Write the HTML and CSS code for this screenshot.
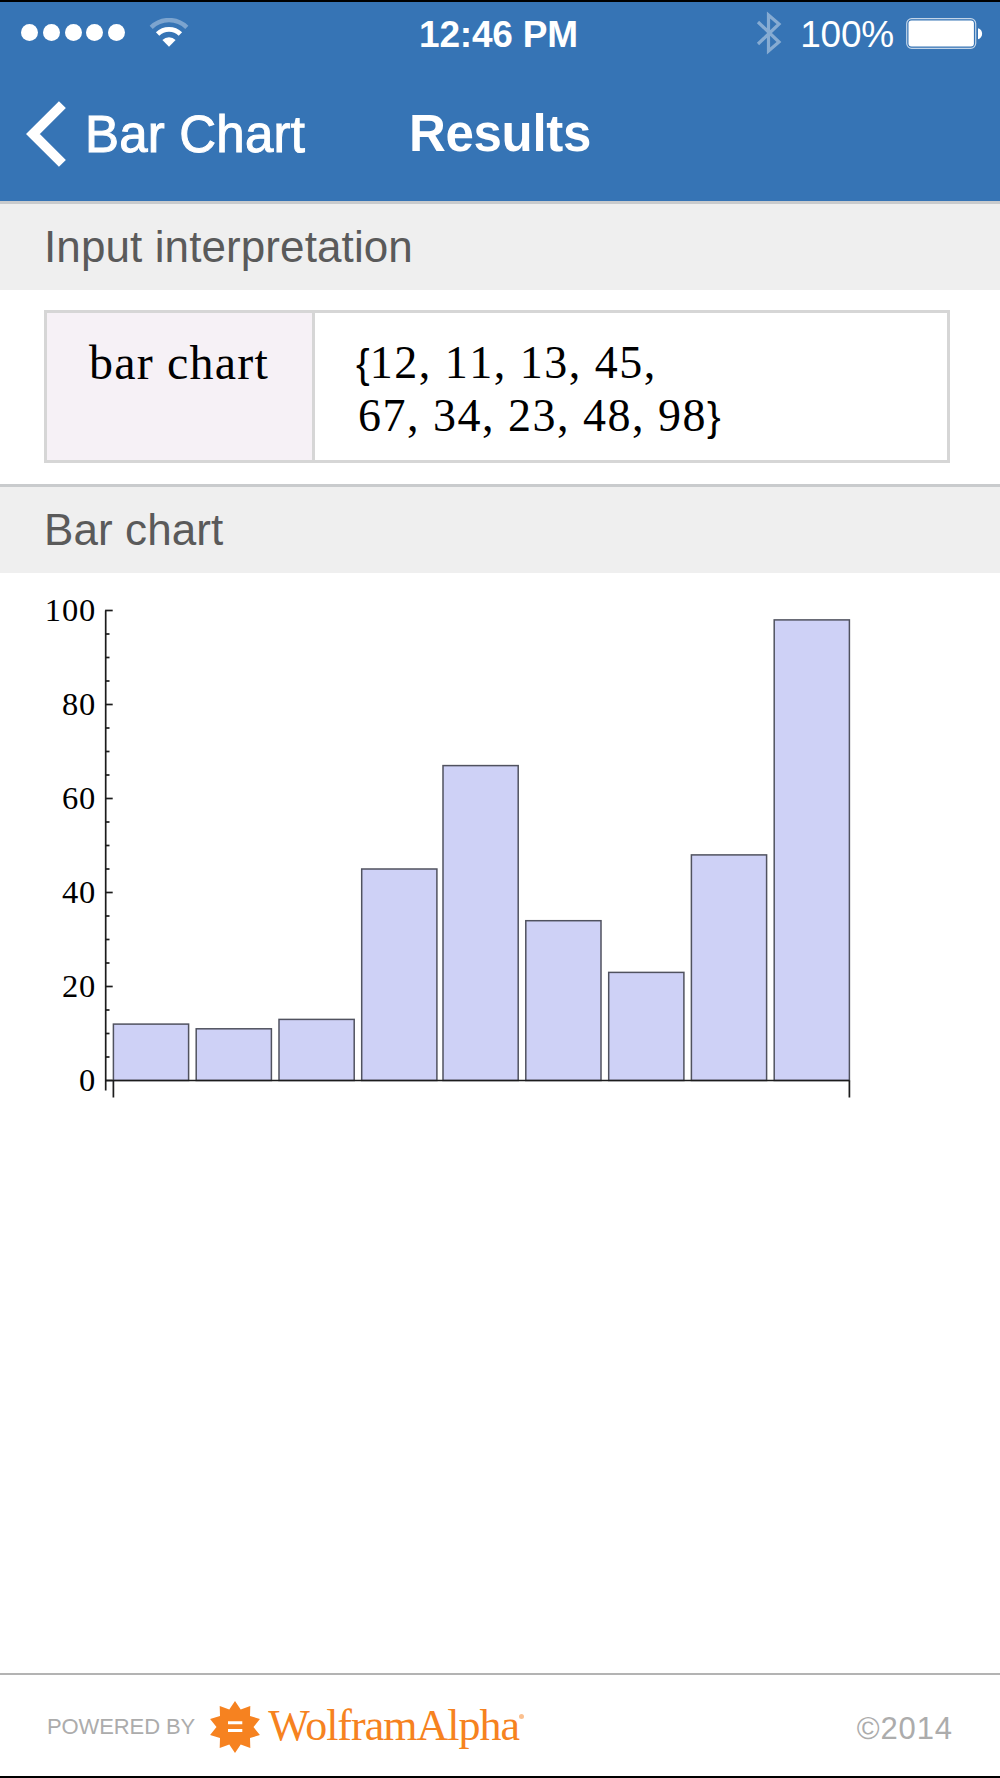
FILE: index.html
```
<!DOCTYPE html>
<html lang="en">
<head>
    <meta charset="UTF-8">
    <meta name="viewport" content="width=device-width, initial-scale=1.0">
    <title>Results</title>
    <link rel="stylesheet" href="styles.css">
</head>
<body>
    <header>
        <div class="status-bar">
            <div class="status-left">
                <div class="signal">
                    <i></i><i></i><i></i><i></i><i></i>
                </div>
                <svg class="wifi" width="40" height="30" viewBox="0 0 40 30">
                    <path d="M2.2 9.3 A25.5 25.5 0 0 1 37.8 9.3" fill="none" stroke="#fff" stroke-width="4.4" opacity="0.35"/>
                    <path d="M8.6 16 A16.2 16.2 0 0 1 31.4 16" fill="none" stroke="#fff" stroke-width="4.8"/>
                    <path d="M20 28.8 L13.4 22 A9.4 9.4 0 0 1 26.6 22 Z" fill="#fff"/>
                </svg>
            </div>
            <div class="clock">12:46 PM</div>
            <div class="status-right">
                <svg class="bluetooth" width="26" height="44" viewBox="0 0 26 44">
                    <path d="M2 11 L23 31 L12.5 40 V4 L23 13 L2 33" fill="none" stroke="#fff" stroke-width="3.2"/>
                </svg>
                <span class="percent">100%</span>
                <svg class="battery" width="78" height="32" viewBox="0 0 78 32">
                    <rect x="0.7" y="0.7" width="69" height="29.6" rx="5" fill="none" stroke="#fff" stroke-width="1.2" opacity="0.7"/>
                    <rect x="2.5" y="2.4" width="65.4" height="26.2" rx="3" fill="#fff"/>
                    <path d="M72 10.3 C77.5 11.5 77.5 20 72 21.2 Z" fill="#fff"/>
                </svg>
            </div>
        </div>
        <nav>
            <a class="back" href="#">
                <svg width="40" height="66" viewBox="0 0 40 66">
                    <path d="M36.4 3.6 L6.9 33 L36.4 62.4" fill="none" stroke="#fff" stroke-width="9.8"/>
                </svg>
                <span>Bar Chart</span>
            </a>
            <h1>Results</h1>
        </nav>
    </header>

    <main>
        <section>
            <h2>Input interpretation</h2>
            <div class="input-table">
                <div class="input-name">bar chart</div>
                <div class="input-value">
                    <div class="row-first"><span class="brace">{</span>12, 11, 13, 45,</div>
                    <div>67, 34, 23, 48, 98<span class="brace">}</span></div>
                </div>
            </div>
        </section>

        <section>
            <h2>Bar chart</h2>
            <svg class="chart" id="chart" width="1000" height="540" viewBox="0 573 1000 540"></svg>
        </section>
    </main>

    <footer>
        <span class="powered">POWERED BY</span>
        <svg class="spikey" width="54" height="54" viewBox="-27 -27 54 54">
            <path d="M0 -26 L5.7 -17.6 L15.3 -21 L15 -10.9 L24.9 -8 L18.5 0 L24.9 8 L15 10.9 L15.3 21 L5.7 17.6 L0 26 L-5.7 17.6 L-15.3 21 L-15 10.9 L-24.9 8 L-18.5 0 L-24.9 -8 L-15 -10.9 L-15.3 -21 L-5.7 -17.6 Z" fill="#f68220"/>
            <path d="M-7 -4.2 H7.3 M-7 3.6 H7.3" stroke="#fff" stroke-width="3"/>
        </svg>
        <span class="brand">WolframAlpha</span><i class="mark"></i>
        <span class="copyright">©2014</span>
    </footer>

    <script>
        // Values with the left edge of each bar
        const bars = [
            { value: 12, x: 113.4 },
            { value: 11, x: 196.2 },
            { value: 13, x: 279 },
            { value: 45, x: 361.7 },
            { value: 67, x: 443 },
            { value: 34, x: 525.8 },
            { value: 23, x: 608.7 },
            { value: 48, x: 691.4 },
            { value: 98, x: 774.2 }
        ];
        const chart = document.getElementById('chart');

        // Axis geometry
        const axisX = 105.7;
        const zeroY = 1080.5;
        const unit = 4.7;
        const barWidth = 75.2;
        const startX = bars[0].x;
        const endX = bars[bars.length - 1].x + barWidth;

        let svg = '';

        // Bars
        bars.forEach(bar => {
            const h = bar.value * unit;
            svg += `<rect class="bar" x="${bar.x}" y="${zeroY - h}" width="${barWidth}" height="${h}"/>`;
        });

        // Vertical axis, ticks every 5, labels every 20
        svg += `<path class="axis" d="M${axisX} ${zeroY - 100 * unit} V${zeroY + 10}"/>`;
        for (let v = 0; v <= 100; v += 5) {
            const y = zeroY - v * unit;
            const major = v % 20 === 0;
            svg += `<path class="axis" d="M${axisX - 0.6} ${y} H${axisX + (major ? 7 : 3.8)}"/>`;
            if (major) {
                svg += `<text class="label" x="96" y="${y + 10}">${v}</text>`;
            }
        }

        // Baseline with end ticks
        svg += `<path class="axis" d="M${axisX} ${zeroY} H${endX} M${startX} ${zeroY} V${zeroY + 17} M${endX} ${zeroY} V${zeroY + 17}"/>`;

        chart.innerHTML = svg;
    </script>
</body>
</html>
```
FILE: styles.css
```
* {
    margin: 0;
    padding: 0;
    box-sizing: border-box;
}

body {
    width: 1000px;
    height: 1778px;
    display: flex;
    flex-direction: column;
    font-family: 'Liberation Sans', Arial, sans-serif;
    background-color: #fff;
    border-top: 2px solid #000;
    border-bottom: 2px solid #000;
    white-space: nowrap;
    overflow: hidden;
}

/* Header */
header {
    height: 199px;
    background-color: #3674b5;
    color: #fff;
}

.status-bar {
    height: 65px;
    display: grid;
    grid-template-columns: 1fr auto 1fr;
    padding: 0 16px 0 21px;
    font-size: 37px;
    line-height: 65px;
}

.status-left {
    display: flex;
    align-items: flex-start;
}

.signal {
    display: flex;
    gap: 4.8px;
    padding-top: 22px;
}

.signal i {
    width: 17px;
    height: 17px;
    border-radius: 50%;
    background-color: #fff;
}

.wifi {
    margin: 16px 0 0 24px;
}

.clock {
    margin-right: 8px;
    font-weight: bold;
    letter-spacing: -0.2px;
}

.status-right {
    display: flex;
    justify-content: flex-end;
    align-items: flex-start;
}

.bluetooth {
    margin: 9px 18px 0 0;
    opacity: 0.4;
}

.percent {
    letter-spacing: -0.2px;
}

.battery {
    margin: 16px 0 0 12px;
}

nav {
    height: 134px;
    display: grid;
    grid-template-columns: 1fr auto 1fr;
    padding: 0 26px;
    font-size: 51px;
    line-height: 133px;
}

.back {
    display: flex;
    align-items: center;
    gap: 19px;
    color: #fff;
    letter-spacing: 0.2px;
    text-decoration: none;
    -webkit-text-stroke: 1px #fff;
}

h1 {
    font-size: 51px;
    font-weight: bold;
    letter-spacing: -0.3px;
}

/* Result sections */
main {
    flex: 1;
}

h2 {
    height: 89px;
    padding-left: 44px;
    border-top: 3px solid #c9cbcd;
    background-color: #efefef;
    color: #5a5a5a;
    font-size: 44px;
    font-weight: normal;
    letter-spacing: 0.1px;
    line-height: 86px;
}

.input-table {
    display: flex;
    width: 906px;
    height: 153px;
    margin: 20px 0 21px 44px;
    border: 3px solid #d6d6d6;
    font-family: 'Liberation Serif', 'Times New Roman', serif;
    color: #000;
    line-height: 53px;
}

.input-name {
    width: 268px;
    padding: 23px 0 0 42px;
    background-color: #f6f1f6;
    border-right: 3px solid #d6d6d6;
    font-size: 48px;
    letter-spacing: 1.2px;
}

.input-value {
    padding: 23px 0 0 43px;
    font-size: 46px;
    font-kerning: none;
    letter-spacing: 1.5px;
}

.row-first {
    margin-left: -2px;
}

.brace {
    font-family: 'Liberation Sans', Arial, sans-serif;
    font-size: 41px;
    line-height: 1;
    letter-spacing: 0;
}

/* Chart */
.chart {
    display: block;
}

.bar {
    fill: #ced1f6;
    stroke: #50525f;
    stroke-width: 1.5;
}

.axis {
    fill: none;
    stroke: #1c1c1c;
    stroke-width: 1.7;
}

.label {
    font-family: 'Liberation Serif', 'Times New Roman', serif;
    font-size: 32.5px;
    letter-spacing: 0.8px;
    text-anchor: end;
}

/* Footer */
footer {
    height: 103px;
    display: flex;
    align-items: flex-start;
    padding: 0 47px;
    border-top: 2px solid #b3b3b3;
    color: #acacac;
}

.powered {
    font-size: 22px;
    line-height: 103px;
    letter-spacing: -0.1px;
}

.spikey {
    margin: 25px 0 0 13px;
}

.brand {
    margin-left: 6px;
    font-family: 'Liberation Serif', 'Times New Roman', serif;
    font-size: 44px;
    line-height: 102px;
    letter-spacing: -1px;
    color: #f68220;
}

.mark {
    width: 5px;
    height: 5px;
    margin-top: 39px;
    border-radius: 50%;
    background-color: #fbc08f;
}

.copyright {
    margin-left: auto;
    font-size: 31px;
    line-height: 107px;
    letter-spacing: 0.9px;
}
```
